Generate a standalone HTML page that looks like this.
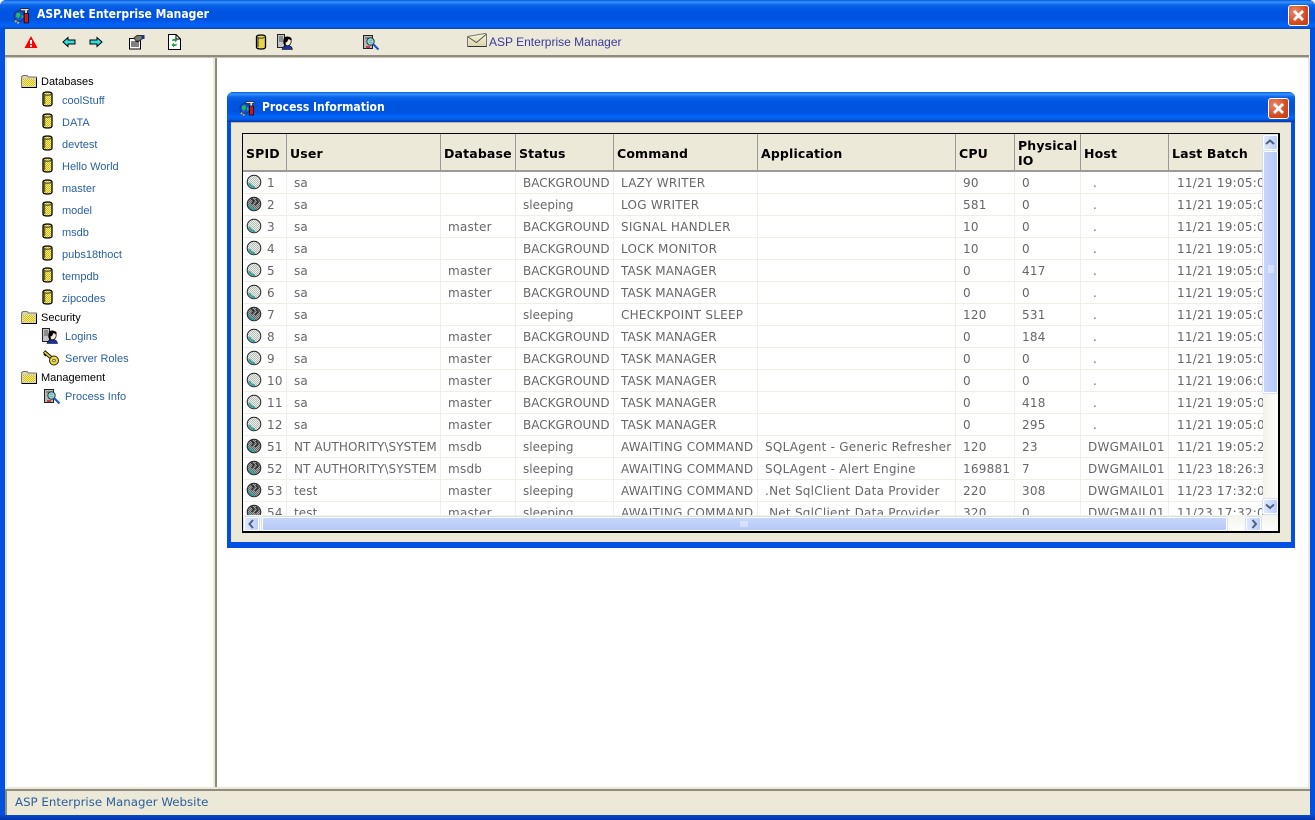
<!DOCTYPE html>
<html><head><meta charset="utf-8"><title>ASP.Net Enterprise Manager</title>
<style>
html,body{margin:0;padding:0;width:1315px;height:820px;overflow:hidden;background:#fff}
div,span,svg,table,th,td{box-sizing:border-box}
.a{position:absolute}
.tb{background:linear-gradient(to bottom,#0058e0 0,#3a93ff 2px,#0a64e8 5px,#0055e3 10px,#0053df 20px,#0066ff 25px,#0a55d0 28px,#003dc0 29px)}
.txt{font-family:"DejaVu Sans",sans-serif;font-size:12px;color:#fff;font-weight:bold;white-space:nowrap;transform:scaleX(.9);transform-origin:0 0}
.close{width:21px;height:21px;background:radial-gradient(circle at 30% 30%,#e88a6c,#d64a20 60%,#c23a12);border:1px solid #fff;border-radius:3px}
.tree{font-family:"Liberation Sans",sans-serif;font-size:11px;white-space:nowrap;line-height:14px}
.l{color:#2a5f9e}.k{color:#000}
table{border-collapse:separate;border-spacing:0;table-layout:fixed;font-family:"DejaVu Sans",sans-serif;font-size:12px;width:1021px}
th{background:#ece9d8;font-weight:bold;color:#000;text-align:left;height:38px;padding:2px 0 0 3px;border-right:1px solid #9a9a9a;border-bottom:2px solid #9a9a9a;line-height:15px;font-size:12.5px;letter-spacing:.15px;white-space:normal;overflow:hidden}
td{height:22px;padding:2px 0 0 7px;color:#666;border-right:1px solid #f1efe2;border-bottom:1px solid #f1efe2;white-space:nowrap;overflow:hidden;letter-spacing:.25px;line-height:15px}
td:nth-child(2){letter-spacing:.08px}
td:nth-child(4){letter-spacing:0}
td.t{letter-spacing:.08px}
td.s{padding:0 0 0 3px}
td.s svg{vertical-align:-3px;margin-right:5px}
td.h{padding-left:12px}
td.d{padding-left:8px}
.bt{background:linear-gradient(to right,#dfe8fd,#bccffa);border:1px solid #fff;border-radius:2px;box-shadow:0 0 0 1px #d3def8}
</style></head><body>
<svg width="0" height="0" style="position:absolute"><defs>
<pattern id="py" width="2" height="2" patternUnits="userSpaceOnUse"><rect width="2" height="2" fill="#fff27a"/><rect width="1" height="1" fill="#c9b820"/><rect x="1" y="1" width="1" height="1" fill="#c9b820"/></pattern>
<pattern id="pl" width="2" height="2" patternUnits="userSpaceOnUse"><rect width="2" height="2" fill="#eef0ee"/><rect width="1" height="1" fill="#b4bcb4"/><rect x="1" y="1" width="1" height="1" fill="#b4bcb4"/></pattern>
<pattern id="pd" width="2" height="2" patternUnits="userSpaceOnUse"><rect width="2" height="2" fill="#a8a8a8"/><rect width="1" height="1" fill="#666"/><rect x="1" y="1" width="1" height="1" fill="#666"/></pattern>
<symbol id="db" viewBox="0 0 11 16"><path d="M1 3Q1 1 5.500 1T10 3V13Q10 15 5.500 15T1 13Z" fill="url(#py)" stroke="#000" stroke-width="1.300"/><path d="M2.500 3.500V13" stroke="#6f6410" stroke-width="1.500"/><path d="M2 3.500Q5.500 5 9 3.500" stroke="#444" fill="none"/></symbol>
<symbol id="fd" viewBox="0 0 16 13"><path d="M.5 12.500V2L2 .5H6L7.500 2H15.500V12.500Z" fill="#d9d3b4" stroke="#7a7560"/><path d="M2 4H14V11H2Z" fill="url(#py)"/><path d="M15.500 3V12.500H1" stroke="#000" fill="none"/></symbol>
<symbol id="g1" viewBox="0 0 16 16"><circle cx="8" cy="8" r="6.800" fill="url(#pl)" stroke="#222"/><path d="M3 9Q5 13 9 13.500" stroke="#35a0a0" stroke-width="2" fill="none"/></symbol>
<symbol id="g2" viewBox="0 0 16 16"><circle cx="8" cy="8" r="6.800" fill="url(#pd)" stroke="#222"/><path d="M5 2.500L8 5 5.500 8M10 3L12 6 9 9" stroke="#2c2c2c" fill="none" stroke-width="1.500"/><path d="M3 9Q5 13 9 13.500" stroke="#35a0a0" stroke-width="2" fill="none"/></symbol>
<symbol id="app" viewBox="0 0 16 16"><circle cx="6" cy="8.500" r="5" fill="#1a4fd8" stroke="#123a80"/><path d="M3 6L6 5 7 8 5 11 3 9Z" fill="#20c050"/><path d="M8 7L10 9 8 11Z" fill="#20c050"/><rect x="10.500" y="6" width="4" height="9" fill="#d01818" stroke="#000" stroke-width=".7"/><path d="M7 1.500H15V3.500H13.500V6H11V3.500H7Z" fill="#ddd" stroke="#222" stroke-width=".7"/><path d="M2 13L6 15.500" stroke="#d8c020" stroke-width="2" stroke-dasharray="1.500 1"/></symbol>
<symbol id="usr" viewBox="0 0 16 16"><rect x=".5" y=".5" width="7" height="13" fill="#c4c4c4" stroke="#222"/><path d="M2 3H6M2 5H6M2 7H6" stroke="#555"/><path d="M5 15.500Q6 11.500 10.500 11.500T15.500 15.500Z" fill="#1a2fa0" stroke="#000" stroke-width=".6"/><ellipse cx="10.500" cy="7.500" rx="3.700" ry="4.200" fill="#f7e8d8" stroke="#000" stroke-width=".7"/><path d="M6.500 10Q5.500 2 10.500 2.500T14.500 6.500L11.500 5 10 8 8.500 8.500 9 11Z" fill="#000"/></symbol>
<symbol id="key" viewBox="0 0 16 16"><path d="M1 1.500L9 8.500" stroke="#111" fill="none" stroke-width="3.500"/><path d="M1.500 2L9 8.500" stroke="#f0dc30" fill="none" stroke-width="1.600"/><path d="M1 4L3 6" stroke="#111" stroke-width="1.500"/><circle cx="11" cy="10.500" r="4.500" fill="#f0dc30" stroke="#222"/><circle cx="11" cy="10.500" r="1.300" fill="#fff" stroke="#333" stroke-width=".7"/></symbol>
<symbol id="pi" viewBox="0 0 17 17"><rect x=".5" y="1.500" width="9" height="13" fill="#b8b8b8" stroke="#222"/><path d="M2 4H8" stroke="#555"/><circle cx="7.500" cy="7.500" r="3.700" fill="#7fe0e0" stroke="#333"/><path d="M6 6.500H9M6 8.500H9" stroke="#e05050" stroke-width=".6"/><path d="M10 10L15.500 15.500" stroke="#1a4fd0" stroke-width="2"/><rect x="3" y="12" width="4" height="2" fill="#c04040"/></symbol>
</defs></svg>

<!-- outer window -->
<div class="a" style="left:0;top:0;width:1315px;height:820px;background:#0250e0;border-radius:6px 6px 0 0"></div>
<div class="a" style="left:0;top:814px;width:1315px;height:6px;background:linear-gradient(#0a4fd8,#0033a8)"></div>
<div class="a tb" style="left:0;top:0;width:1315px;height:29px;border-radius:6px 6px 0 0"></div>
<svg class="a" style="left:13px;top:7px" width="17" height="17"><use href="#app"/></svg>
<div class="a txt" style="left:37px;top:7px">ASP.Net Enterprise Manager</div>
<div class="a close" style="left:1288px;top:5px"></div>
<svg class="a" style="left:1288px;top:5px" width="21" height="21"><path d="M6 6L15 15M15 6L6 15" stroke="#fff" stroke-width="2.800"/></svg>

<!-- client -->
<div class="a" style="left:5px;top:29px;width:1305px;height:786px;background:#fff"></div>
<div class="a" style="left:5px;top:29px;width:1305px;height:27px;background:#ece9d8"></div>
<div class="a" style="left:5px;top:55px;width:1304px;height:3px;background:#8f8c7e;border-bottom:1px solid #c9c6b5"></div>
<div class="a" style="left:215px;top:58px;width:2px;height:731px;background:#8f8c7e"></div>
<div class="a" style="left:213px;top:58px;width:2px;height:731px;background:#ece9d8"></div>
<div class="a" style="left:5px;top:58px;width:2px;height:731px;background:#ece9d8"></div>
<div class="a" style="left:1308px;top:58px;width:2px;height:731px;background:#ece9d8"></div>
<div class="a" style="left:5px;top:787px;width:1305px;height:3px;background:#ece9d8"></div>
<div class="a" style="left:5px;top:789px;width:1305px;height:26px;background:#ece9d8;border-top:2px solid #8f8c7e;border-left:2px solid #8f8c7e"></div>
<div class="a" style="left:15px;top:795px;font:11.8px 'DejaVu Sans',sans-serif;color:#2a5f9e;white-space:nowrap">ASP Enterprise Manager Website</div>

<!-- toolbar icons -->
<svg class="a" style="left:24px;top:35px" width="14" height="14"><path d="M7 1L13.500 13H.5Z" fill="#f00"/><path d="M6 5H8V9H6ZM6 10H8V12H6Z" fill="#fff"/></svg>
<svg class="a" style="left:62px;top:36px" width="14" height="12"><path d="M1 6L6 1.500V4H13V8H6V10.500Z" fill="#2fe0e0" stroke="#000"/></svg>
<svg class="a" style="left:89px;top:36px" width="14" height="12"><path d="M13 6L8 1.500V4H1V8H8V10.500Z" fill="#2fe0e0" stroke="#000"/></svg>
<svg class="a" style="left:128px;top:34px" width="17" height="16"><path d="M1.500 4.500H12.500V15H1.500Z" fill="#fff" stroke="#000"/><path d="M3 8H11M3 10H11M3 12H11" stroke="#000"/><path d="M6 4L9 1.500H14V5L11 7H8Z" fill="#777" stroke="#333"/><path d="M14 1H16.500V5H14Z" fill="#1a2f90"/></svg>
<svg class="a" style="left:168px;top:34px" width="13" height="16"><path d="M.5.5H8L12.500 5V15.500H.5Z" fill="#fff" stroke="#000"/><path d="M8 .5V5H12.500" fill="none" stroke="#000"/><path d="M4 7Q4 4.500 7 5V3.500L9.500 6 7 8.500V7Q5.500 6.500 4 7ZM9 10Q9 12.500 6 12V13.500L3.500 11 6 8.500V10Q7.500 10.500 9 10Z" fill="#20a040"/></svg>
<svg class="a" style="left:255px;top:34px" width="12" height="16"><use href="#db"/></svg>
<svg class="a" style="left:277px;top:34px" width="16" height="16"><use href="#usr"/></svg>
<svg class="a" style="left:363px;top:34px" width="17" height="17"><use href="#pi"/></svg>
<svg class="a" style="left:467px;top:33px" width="20" height="15"><defs><linearGradient id="env" x1="0" y1="0" x2="0" y2="1"><stop offset="0" stop-color="#fbf8dc"/><stop offset="1" stop-color="#d8d2a8"/></linearGradient></defs><path d="M.5 3.500L18 .5 19.500 1V13.500H.5Z" fill="url(#env)" stroke="#777"/><path d="M1 4L9.500 9.500 19 1.500" fill="none" stroke="#555"/><path d="M1 14H19.500V13H1Z" fill="#333"/></svg>
<div class="a" style="left:489px;top:35px;font:12px 'Liberation Sans',sans-serif;color:#3a3a9a;white-space:nowrap">ASP Enterprise Manager</div>

<!-- tree -->
<svg class="a" style="left:21px;top:75px" width="16" height="13"><use href="#fd"/></svg><div class="a tree k" style="left:41px;top:75px">Databases</div>
<svg class="a" style="left:42px;top:91px" width="11" height="16"><use href="#db"/></svg><div class="a tree l" style="left:62px;top:94px">coolStuff</div>
<svg class="a" style="left:42px;top:113px" width="11" height="16"><use href="#db"/></svg><div class="a tree l" style="left:62px;top:116px">DATA</div>
<svg class="a" style="left:42px;top:135px" width="11" height="16"><use href="#db"/></svg><div class="a tree l" style="left:62px;top:138px">devtest</div>
<svg class="a" style="left:42px;top:157px" width="11" height="16"><use href="#db"/></svg><div class="a tree l" style="left:62px;top:160px">Hello World</div>
<svg class="a" style="left:42px;top:179px" width="11" height="16"><use href="#db"/></svg><div class="a tree l" style="left:62px;top:182px">master</div>
<svg class="a" style="left:42px;top:201px" width="11" height="16"><use href="#db"/></svg><div class="a tree l" style="left:62px;top:204px">model</div>
<svg class="a" style="left:42px;top:223px" width="11" height="16"><use href="#db"/></svg><div class="a tree l" style="left:62px;top:226px">msdb</div>
<svg class="a" style="left:42px;top:245px" width="11" height="16"><use href="#db"/></svg><div class="a tree l" style="left:62px;top:248px">pubs18thoct</div>
<svg class="a" style="left:42px;top:267px" width="11" height="16"><use href="#db"/></svg><div class="a tree l" style="left:62px;top:270px">tempdb</div>
<svg class="a" style="left:42px;top:289px" width="11" height="16"><use href="#db"/></svg><div class="a tree l" style="left:62px;top:292px">zipcodes</div>
<svg class="a" style="left:21px;top:311px" width="16" height="13"><use href="#fd"/></svg><div class="a tree k" style="left:41px;top:311px">Security</div>
<svg class="a" style="left:42px;top:328px" width="16" height="16"><use href="#usr"/></svg><div class="a tree l" style="left:65px;top:330px">Logins</div>
<svg class="a" style="left:43px;top:350px" width="16" height="16"><use href="#key"/></svg><div class="a tree l" style="left:65px;top:352px">Server Roles</div>
<svg class="a" style="left:21px;top:371px" width="16" height="13"><use href="#fd"/></svg><div class="a tree k" style="left:41px;top:371px">Management</div>
<svg class="a" style="left:44px;top:388px" width="17" height="17"><use href="#pi"/></svg><div class="a tree l" style="left:65px;top:390px">Process Info</div>

<!-- inner window -->
<div class="a" style="left:227px;top:92px;width:1068px;height:456px;background:#0250e0;border-radius:6px 6px 0 0"></div>
<div class="a tb" style="left:227px;top:92px;width:1068px;height:30px;border-radius:6px 6px 0 0"></div>
<div class="a" style="left:231px;top:122px;width:1060px;height:420px;background:#ece9d8;border-top:1px solid #b5b5a8"></div>
<svg class="a" style="left:239px;top:100px" width="16" height="16"><use href="#app"/></svg>
<div class="a txt" style="left:262px;top:100px">Process Information</div>
<div class="a close" style="left:1268px;top:98px"></div>
<svg class="a" style="left:1268px;top:98px" width="21" height="21"><path d="M6 6L15 15M15 6L6 15" stroke="#fff" stroke-width="2.800"/></svg>

<!-- grid -->
<div class="a" style="left:242px;top:133px;width:1038px;height:400px;background:#fff;border:1px solid #000;border-width:1px 2px 2px 1px;overflow:hidden">
<div class="a" style="left:0;top:0;width:1020px;height:381px;overflow:hidden">
<table>
<colgroup><col style="width:44px"><col style="width:154px"><col style="width:75px"><col style="width:98px"><col style="width:144px"><col style="width:198px"><col style="width:59px"><col style="width:66px"><col style="width:88px"><col style="width:95px"></colgroup>
<tr><th>SPID</th><th>User</th><th>Database</th><th>Status</th><th>Command</th><th>Application</th><th>CPU</th><th>Physical IO</th><th>Host</th><th style="border-right:0">Last Batch</th></tr>
<tr><td class="s"><svg width="16" height="16"><use href="#g1"/></svg>1</td><td>sa</td><td></td><td>BACKGROUND</td><td>LAZY WRITER</td><td></td><td>90</td><td>0</td><td class="h">.</td><td class="d">11/21 19:05:05</td></tr>
<tr><td class="s"><svg width="16" height="16"><use href="#g2"/></svg>2</td><td>sa</td><td></td><td>sleeping</td><td>LOG WRITER</td><td></td><td>581</td><td>0</td><td class="h">.</td><td class="d">11/21 19:05:05</td></tr>
<tr><td class="s"><svg width="16" height="16"><use href="#g1"/></svg>3</td><td>sa</td><td>master</td><td>BACKGROUND</td><td>SIGNAL HANDLER</td><td></td><td>10</td><td>0</td><td class="h">.</td><td class="d">11/21 19:05:05</td></tr>
<tr><td class="s"><svg width="16" height="16"><use href="#g1"/></svg>4</td><td>sa</td><td></td><td>BACKGROUND</td><td>LOCK MONITOR</td><td></td><td>10</td><td>0</td><td class="h">.</td><td class="d">11/21 19:05:05</td></tr>
<tr><td class="s"><svg width="16" height="16"><use href="#g1"/></svg>5</td><td>sa</td><td>master</td><td>BACKGROUND</td><td class="t">TASK MANAGER</td><td></td><td>0</td><td>417</td><td class="h">.</td><td class="d">11/21 19:05:05</td></tr>
<tr><td class="s"><svg width="16" height="16"><use href="#g1"/></svg>6</td><td>sa</td><td>master</td><td>BACKGROUND</td><td class="t">TASK MANAGER</td><td></td><td>0</td><td>0</td><td class="h">.</td><td class="d">11/21 19:05:05</td></tr>
<tr><td class="s"><svg width="16" height="16"><use href="#g2"/></svg>7</td><td>sa</td><td></td><td>sleeping</td><td>CHECKPOINT SLEEP</td><td></td><td>120</td><td>531</td><td class="h">.</td><td class="d">11/21 19:05:05</td></tr>
<tr><td class="s"><svg width="16" height="16"><use href="#g1"/></svg>8</td><td>sa</td><td>master</td><td>BACKGROUND</td><td class="t">TASK MANAGER</td><td></td><td>0</td><td>184</td><td class="h">.</td><td class="d">11/21 19:05:05</td></tr>
<tr><td class="s"><svg width="16" height="16"><use href="#g1"/></svg>9</td><td>sa</td><td>master</td><td>BACKGROUND</td><td class="t">TASK MANAGER</td><td></td><td>0</td><td>0</td><td class="h">.</td><td class="d">11/21 19:05:05</td></tr>
<tr><td class="s"><svg width="16" height="16"><use href="#g1"/></svg>10</td><td>sa</td><td>master</td><td>BACKGROUND</td><td class="t">TASK MANAGER</td><td></td><td>0</td><td>0</td><td class="h">.</td><td class="d">11/21 19:06:05</td></tr>
<tr><td class="s"><svg width="16" height="16"><use href="#g1"/></svg>11</td><td>sa</td><td>master</td><td>BACKGROUND</td><td class="t">TASK MANAGER</td><td></td><td>0</td><td>418</td><td class="h">.</td><td class="d">11/21 19:05:05</td></tr>
<tr><td class="s"><svg width="16" height="16"><use href="#g1"/></svg>12</td><td>sa</td><td>master</td><td>BACKGROUND</td><td class="t">TASK MANAGER</td><td></td><td>0</td><td>295</td><td class="h">.</td><td class="d">11/21 19:05:05</td></tr>
<tr><td class="s"><svg width="16" height="16"><use href="#g2"/></svg>51</td><td>NT AUTHORITY\SYSTEM</td><td>msdb</td><td>sleeping</td><td>AWAITING COMMAND</td><td>SQLAgent - Generic Refresher</td><td>120</td><td>23</td><td>DWGMAIL01</td><td class="d">11/21 19:05:25</td></tr>
<tr><td class="s"><svg width="16" height="16"><use href="#g2"/></svg>52</td><td>NT AUTHORITY\SYSTEM</td><td>msdb</td><td>sleeping</td><td>AWAITING COMMAND</td><td>SQLAgent - Alert Engine</td><td>169881</td><td>7</td><td>DWGMAIL01</td><td class="d">11/23 18:26:35</td></tr>
<tr><td class="s"><svg width="16" height="16"><use href="#g2"/></svg>53</td><td>test</td><td>master</td><td>sleeping</td><td>AWAITING COMMAND</td><td>.Net SqlClient Data Provider</td><td>220</td><td>308</td><td>DWGMAIL01</td><td class="d">11/23 17:32:05</td></tr>
<tr><td class="s"><svg width="16" height="16"><use href="#g2"/></svg>54</td><td>test</td><td>master</td><td>sleeping</td><td>AWAITING COMMAND</td><td>.Net SqlClient Data Provider</td><td>320</td><td>0</td><td>DWGMAIL01</td><td class="d">11/23 17:32:05</td></tr>
</table>
</div>
<!-- vertical scrollbar -->
<div class="a" style="left:1020px;top:0;width:16px;height:381px;background:linear-gradient(to right,#f3f2ea,#fff)"></div>
<div class="a bt" style="left:1020px;top:1px;width:15px;height:15px"></div>
<svg class="a" style="left:1021px;top:3px" width="12" height="11"><path d="M2 7L6 3.500 10 7" stroke="#4d6185" stroke-width="2" fill="none"/></svg>
<div class="a bt" style="left:1020px;top:17px;width:15px;height:242px;background:linear-gradient(to right,#c8d6fb,#b5c9f8)"></div>
<svg class="a" style="left:1024px;top:131px" width="8" height="9"><path d="M1 1H7M1 3H7M1 5H7M1 7H7" stroke="#eef3ff"/></svg>
<div class="a bt" style="left:1020px;top:365px;width:15px;height:15px"></div>
<svg class="a" style="left:1021px;top:367px" width="12" height="11"><path d="M2 3.500L6 7 10 3.500" stroke="#4d6185" stroke-width="2" fill="none"/></svg>
<!-- horizontal scrollbar -->
<div class="a" style="left:0;top:381px;width:1036px;height:17px;background:linear-gradient(#f3f2ea,#fff)"></div>
<div class="a bt" style="left:1px;top:383px;width:15px;height:14px"></div>
<svg class="a" style="left:3px;top:384px" width="11" height="12"><path d="M7 2L3.500 6 7 10" stroke="#4d6185" stroke-width="2" fill="none"/></svg>
<div class="a bt" style="left:19px;top:383px;width:965px;height:14px;background:linear-gradient(#c8d6fb,#b5c9f8)"></div>
<svg class="a" style="left:497px;top:386px" width="9" height="8"><path d="M1 1V7M3 1V7M5 1V7M7 1V7" stroke="#eef3ff"/></svg>
<div class="a bt" style="left:1003px;top:383px;width:15px;height:14px"></div>
<svg class="a" style="left:1005px;top:384px" width="12" height="12"><path d="M4.500 2L8 6 4.500 10" stroke="#4d6185" stroke-width="2" fill="none"/></svg>
</div>
</body></html>
